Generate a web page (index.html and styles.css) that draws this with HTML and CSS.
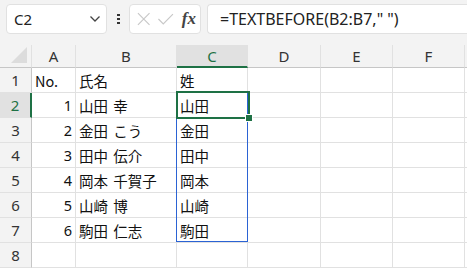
FILE: index.html
```html
<!DOCTYPE html>
<html lang="ja">
<head>
    <meta charset="UTF-8">
    <title>TEXTBEFORE</title>
    <link rel="stylesheet" href="styles.css">
</head>
<body>
    <div class="toolbar">
        <div class="name-box">
            <span>C2</span>
            <svg class="chevron" width="12" height="8" viewBox="0 0 12 8"><path d="M1.5 1.5 L6 6 L10.5 1.5" fill="none" stroke="#444" stroke-width="1.3"/></svg>
        </div>
        <div class="dots"><i></i><i></i><i></i></div>
        <div class="fx-box">
            <svg width="16" height="16" viewBox="0 0 16 16"><path d="M2 2 L14 14 M14 2 L2 14" stroke="#c8c8c8" stroke-width="1.2"/></svg>
            <svg width="18" height="16" viewBox="0 0 18 16"><path d="M1.5 8 L6.5 13 L16.5 3" fill="none" stroke="#c8c8c8" stroke-width="1.2"/></svg>
            <span class="fx">fx</span>
        </div>
        <div class="formula">=TEXTBEFORE(B2:B7," ")</div>
    </div>

    <div class="sheet">
        <div class="grid">
            <div class="corner"><div class="tri"></div></div>
            <div class="col-head">A</div>
            <div class="col-head">B</div>
            <div class="col-head active">C</div>
            <div class="col-head">D</div>
            <div class="col-head">E</div>
            <div class="col-head">F</div>
            <div class="col-head"></div>

            <div class="row-head">1</div>
            <div class="cell">No.</div>
            <div class="cell">氏名</div>
            <div class="cell">姓</div>
            <div class="cell"></div><div class="cell"></div><div class="cell"></div><div class="cell"></div>

            <div class="row-head active">2</div>
            <div class="cell num">1</div>
            <div class="cell">山田 幸</div>
            <div class="cell">山田</div>
            <div class="cell"></div><div class="cell"></div><div class="cell"></div><div class="cell"></div>

            <div class="row-head">3</div>
            <div class="cell num">2</div>
            <div class="cell">金田 こう</div>
            <div class="cell">金田</div>
            <div class="cell"></div><div class="cell"></div><div class="cell"></div><div class="cell"></div>

            <div class="row-head">4</div>
            <div class="cell num">3</div>
            <div class="cell">田中 伝介</div>
            <div class="cell">田中</div>
            <div class="cell"></div><div class="cell"></div><div class="cell"></div><div class="cell"></div>

            <div class="row-head">5</div>
            <div class="cell num">4</div>
            <div class="cell">岡本 千賀子</div>
            <div class="cell">岡本</div>
            <div class="cell"></div><div class="cell"></div><div class="cell"></div><div class="cell"></div>

            <div class="row-head">6</div>
            <div class="cell num">5</div>
            <div class="cell">山崎 博</div>
            <div class="cell">山崎</div>
            <div class="cell"></div><div class="cell"></div><div class="cell"></div><div class="cell"></div>

            <div class="row-head">7</div>
            <div class="cell num">6</div>
            <div class="cell">駒田 仁志</div>
            <div class="cell">駒田</div>
            <div class="cell"></div><div class="cell"></div><div class="cell"></div><div class="cell"></div>

            <div class="row-head">8</div>
            <div class="cell"></div><div class="cell"></div><div class="cell"></div>
            <div class="cell"></div><div class="cell"></div><div class="cell"></div><div class="cell"></div>
        </div>

        <div class="spill"></div>
        <div class="active-cell"><div class="handle"></div></div>
    </div>
</body>
</html>
```

FILE: styles.css
```css
body {
    margin: 0;
    width: 467px;
    height: 268px;
    overflow: hidden;
    background: #fff;
    font-family: "Noto Sans", "Open Sans", sans-serif;
    color: #222;
}

.toolbar {
    display: flex;
    align-items: center;
    height: 45px;
    padding: 0 0 8px 6px;
    box-sizing: border-box;
    background: #f3f3f3;
}

.name-box {
    display: flex;
    align-items: center;
    justify-content: space-between;
    width: 101px;
    height: 30px;
    box-sizing: border-box;
    padding: 0 5px 0 7px;
    background: #fff;
    border: 1px solid #e1e1e1;
    border-radius: 4px;
    font-size: 15px;
    color: #222;
}

.chevron {
    margin-top: 1px;
}

.dots {
    display: flex;
    flex-direction: column;
    gap: 2px;
    width: 22px;
    align-items: center;
}

.dots i {
    display: block;
    width: 3px;
    height: 2px;
    background: #333;
}

.fx-box {
    display: flex;
    align-items: center;
    gap: 6px;
    width: 72px;
    height: 30px;
    box-sizing: border-box;
    padding: 0 4px 0 6px;
    background: #fff;
    border: 1px solid #e1e1e1;
    border-radius: 4px;
}

.fx {
    font-family: "Liberation Serif", serif;
    font-style: italic;
    font-size: 17px;
    font-weight: bold;
    color: #444;
    margin-left: 1px;
}

.formula {
    flex: 1;
    height: 30px;
    margin-left: 6px;
    box-sizing: border-box;
    padding: 3px 0 0 12px;
    background: #fff;
    border: 1px solid #e1e1e1;
    border-right: none;
    border-radius: 4px 0 0 4px;
    font-size: 16px;
    color: #222;
}

.sheet {
    position: relative;
}

.grid {
    display: grid;
    grid-template-columns: 32px 44px 101px 71px 73px 72px 72px 10px;
    grid-template-rows: 23px repeat(8, 25px);
    background: #f3f3f3;
}

.corner {
    background: #f3f3f3;
    border-right: 1px solid #e1e1e1;
    border-bottom: 1px solid #c6c6c6;
    position: relative;
}

.tri {
    position: absolute;
    right: 4px;
    bottom: 4px;
    width: 0;
    height: 0;
    border-left: 16px solid transparent;
    border-bottom: 16px solid #dcdcdc;
}

.col-head {
    display: flex;
    align-items: center;
    justify-content: center;
    background: #f3f3f3;
    border-right: 1px solid #e1e1e1;
    border-bottom: 1px solid #c6c6c6;
    font-size: 15px;
    color: #333;
}

.col-head.active {
    background: #e1e1e1;
    border-bottom: 2px solid #1e7145;
    color: #1e7145;
}

.row-head {
    display: flex;
    align-items: center;
    justify-content: center;
    background: #f3f3f3;
    border-right: 1px solid #c6c6c6;
    border-bottom: 1px solid #e1e1e1;
    font-size: 15px;
    color: #333;
}

.row-head.active {
    background: #e1e1e1;
    border-right: 2px solid #1e7145;
    color: #1e7145;
}

.cell {
    display: flex;
    align-items: center;
    padding: 0 3px 0 3px;
    background: #fff;
    border-right: 1px solid #e1e1e1;
    border-bottom: 1px solid #e1e1e1;
    font-family: "Noto Sans CJK JP", "Noto Sans", sans-serif;
    font-size: 14.5px;
    word-spacing: 2px;
    color: #111;
    white-space: pre;
    overflow: hidden;
}

.cell.num {
    justify-content: flex-end;
    font-family: "Noto Sans", sans-serif;
}

.spill {
    position: absolute;
    left: 176px;
    top: 47px;
    width: 72px;
    height: 150px;
    border: 1px solid #2b63d4;
    box-sizing: border-box;
}

.active-cell {
    position: absolute;
    left: 176px;
    top: 46px;
    width: 74px;
    height: 28px;
    border: 2px solid #1e7145;
    box-sizing: border-box;
}

.handle {
    position: absolute;
    right: -5px;
    bottom: -5px;
    width: 6px;
    height: 6px;
    background: #1e7145;
    border: 1px solid #fff;
}
```
